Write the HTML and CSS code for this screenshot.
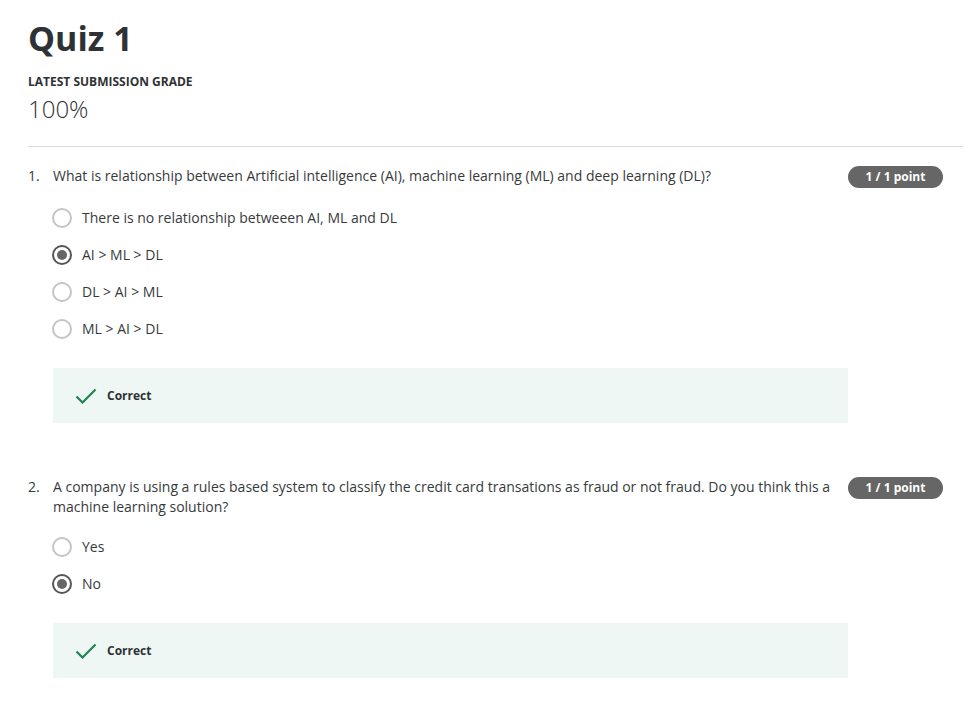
FILE: index.html
```html
<!DOCTYPE html>
<html>
<head>
<meta charset="utf-8">
<link rel="stylesheet" href="styles.css">
</head>
<body>
<div class="page">
  <header class="head">
    <h1 class="title">Quiz 1</h1>
    <div class="grade-label">LATEST SUBMISSION GRADE</div>
    <div class="grade">100%</div>
  </header>

  <section class="question">
    <div class="q-row">
      <div class="q-num">1.</div>
      <div class="q-text">What is relationship between Artificial intelligence (AI), machine learning (ML) and deep learning (DL)?</div>
      <div class="badge">1 / 1 point</div>
    </div>
    <div class="options">
      <div class="option"><span class="radio"></span><span>There is no relationship betweeen AI, ML and DL</span></div>
      <div class="option"><span class="radio checked"></span><span>AI &gt; ML &gt; DL</span></div>
      <div class="option"><span class="radio"></span><span>DL &gt; AI &gt; ML</span></div>
      <div class="option"><span class="radio"></span><span>ML &gt; AI &gt; DL</span></div>
    </div>
    <div class="feedback">
      <svg class="check" width="22" height="16" viewBox="0 0 22 16"><path d="M1.5 8.5 L7.5 14.5 L20.5 1.5" fill="none" stroke="#1f8354" stroke-width="2.2"/></svg>
      <span>Correct</span>
    </div>
  </section>

  <section class="question">
    <div class="q-row">
      <div class="q-num">2.</div>
      <div class="q-text">A company is using a rules based system to classify the credit card transations as fraud or not fraud. Do you think this a machine learning solution?</div>
      <div class="badge">1 / 1 point</div>
    </div>
    <div class="options">
      <div class="option"><span class="radio"></span><span>Yes</span></div>
      <div class="option"><span class="radio checked"></span><span>No</span></div>
    </div>
    <div class="feedback">
      <svg class="check" width="22" height="16" viewBox="0 0 22 16"><path d="M1.5 8.5 L7.5 14.5 L20.5 1.5" fill="none" stroke="#1f8354" stroke-width="2.2"/></svg>
      <span>Correct</span>
    </div>
  </section>
</div>
</body>
</html>
```

FILE: styles.css
```css
html, body {
  margin: 0;
  padding: 0;
  background: #ffffff;
}
body {
  font-family: "Open Sans", "Liberation Sans", sans-serif;
  color: #373a3c;
}
.page {
  width: 935px;
  padding: 0 0 0 28px;
}
.head {
  padding-top: 14px;
  padding-bottom: 23px;
  border-bottom: 1px solid #dcdcdc;
}
.title {
  margin: 0;
  font-size: 34px;
  line-height: 48px;
  font-weight: 700;
  color: #2f3235;
}
.grade-label {
  margin-top: 12px;
  font-size: 12px;
  line-height: 16px;
  font-weight: 700;
  color: #2f3235;
}
.grade {
  margin-top: 5px;
  font-size: 24px;
  line-height: 28px;
  font-weight: 300;
  color: #2f3235;
}
.question {
  padding-top: 19px;
  padding-bottom: 35px;
}
.q-row {
  display: flex;
  align-items: flex-start;
  width: 915px;
}
.q-num {
  width: 25px;
  flex: none;
  font-size: 14px;
  line-height: 20px;
}
.q-text {
  flex: 1;
  font-size: 14px;
  line-height: 20px;
  padding-right: 16px;
}
.badge {
  flex: none;
  width: 95px;
  height: 22px;
  border-radius: 11px;
  background: #666666;
  color: #ffffff;
  font-size: 12px;
  font-weight: 700;
  line-height: 22px;
  text-align: center;
}
.options {
  margin-left: 24px;
  margin-top: 20px;
  display: flex;
  flex-direction: column;
  gap: 17px;
}
.option {
  display: flex;
  align-items: center;
  gap: 10px;
  font-size: 14px;
  line-height: 20px;
  height: 20px;
}
.radio {
  box-sizing: border-box;
  width: 20px;
  height: 20px;
  border-radius: 50%;
  border: 2px solid #c4c4c4;
  display: flex;
  align-items: center;
  justify-content: center;
  flex: none;
}
.radio.checked {
  border-color: #555555;
}
.radio.checked::after {
  content: "";
  width: 10px;
  height: 10px;
  border-radius: 50%;
  background: #666666;
}
.feedback {
  margin-top: 29px;
  margin-left: 25px;
  width: 795px;
  height: 55px;
  background: #eef7f4;
  display: flex;
  align-items: center;
  padding-left: 22px;
  box-sizing: border-box;
  gap: 10px;
  font-size: 12px;
  font-weight: 700;
  color: #2f3235;
}
.check {
  display: block;
}
```
